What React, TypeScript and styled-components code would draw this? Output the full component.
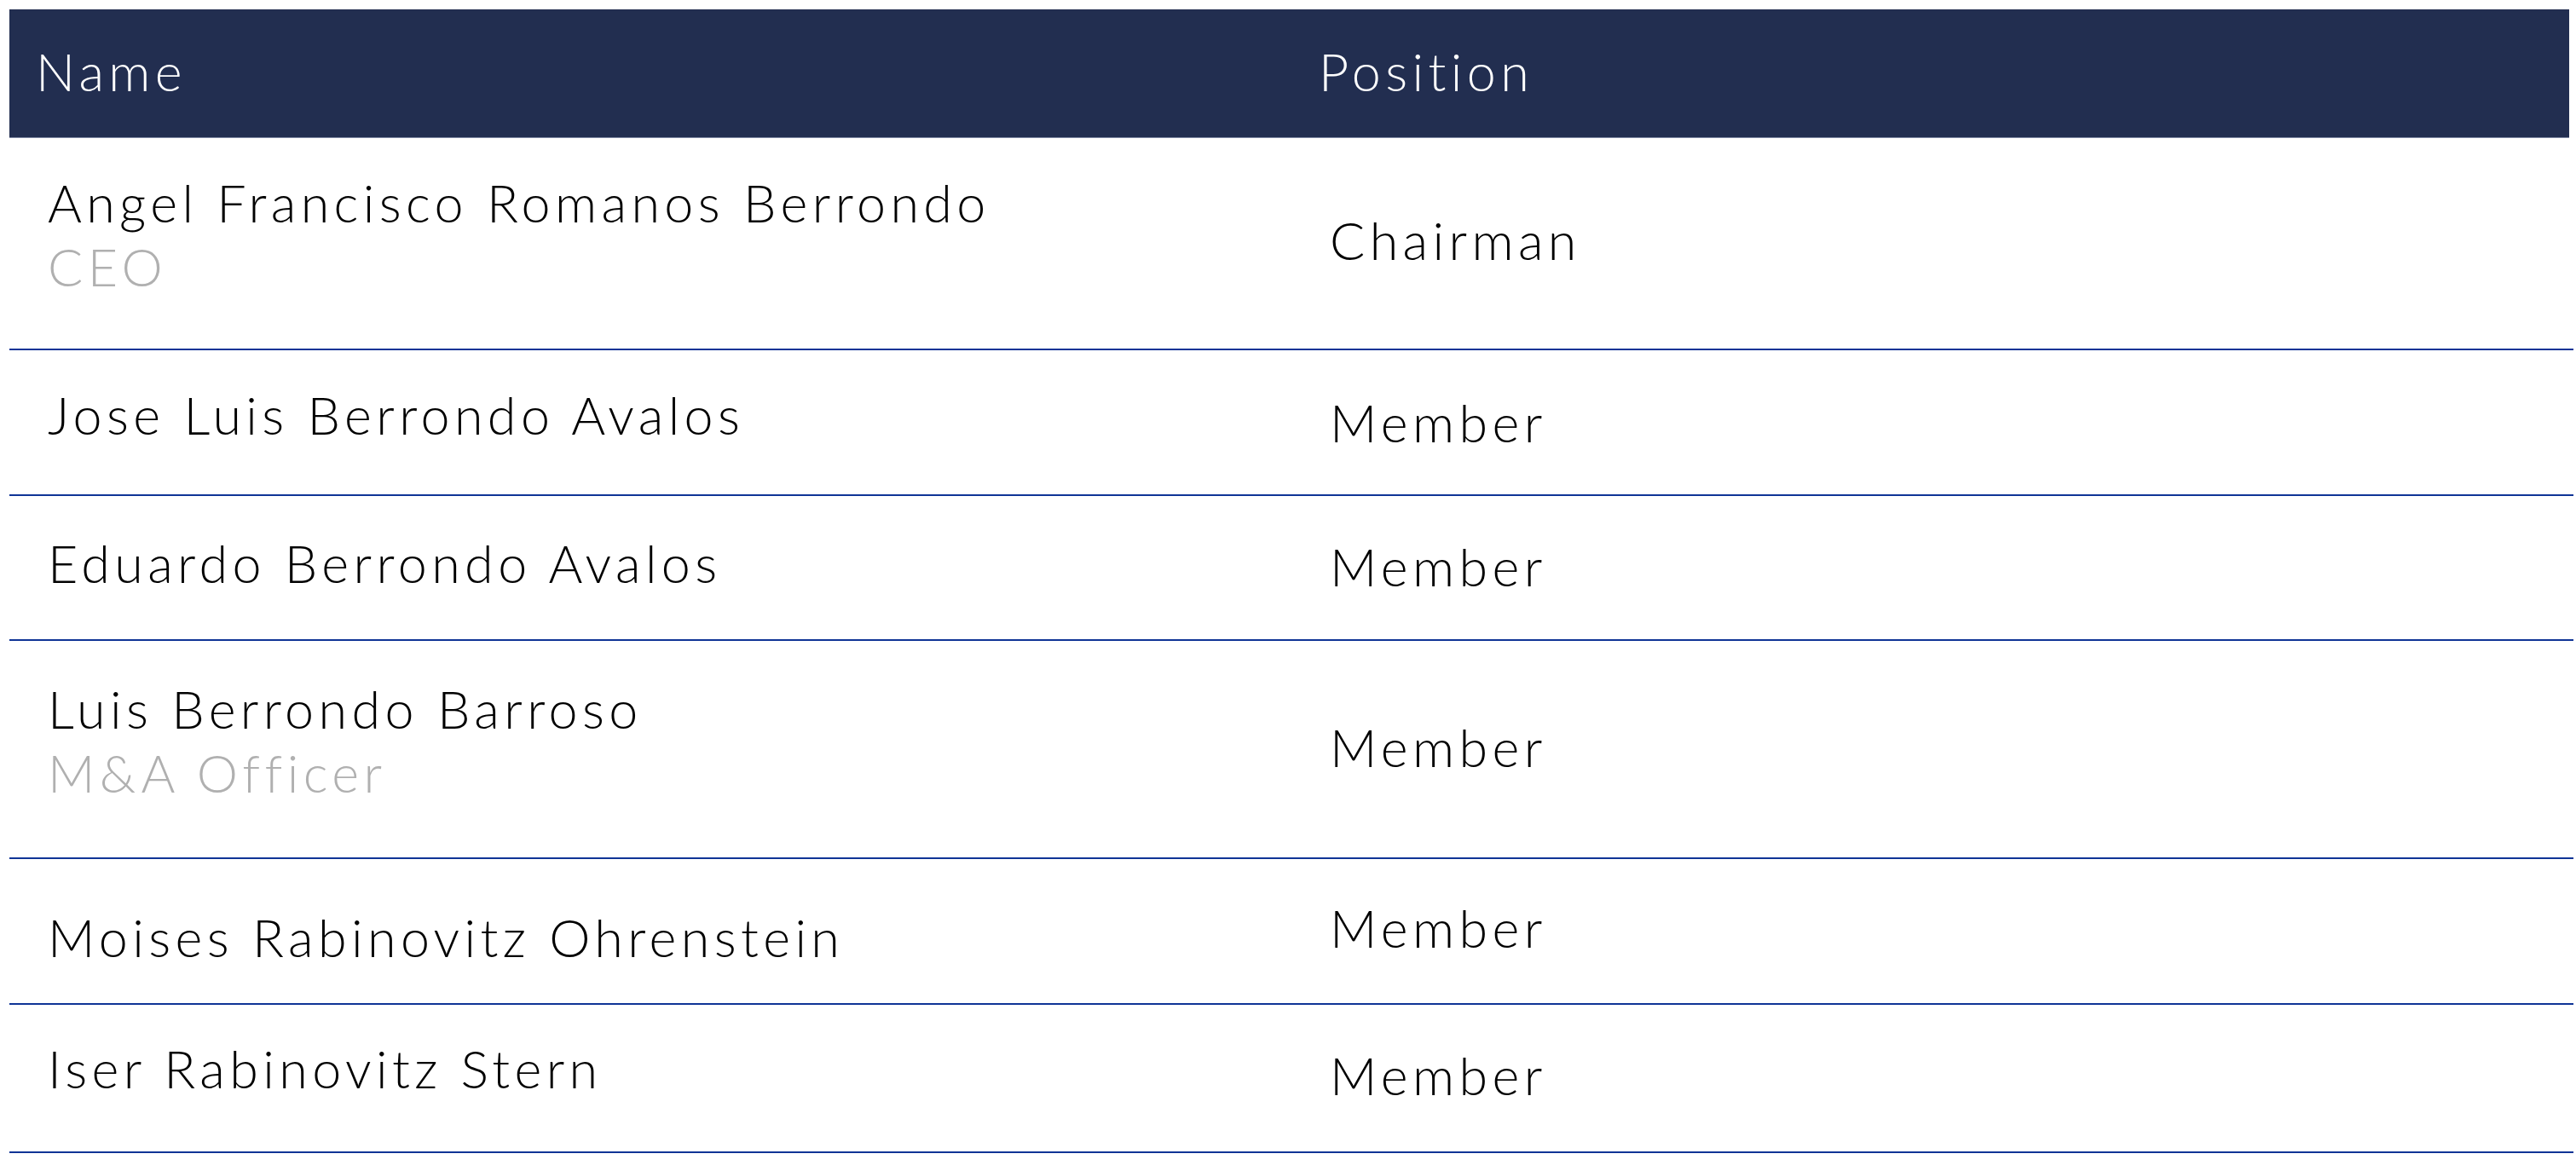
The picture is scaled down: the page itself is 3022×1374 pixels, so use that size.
import React from "react";
import styled, { createGlobalStyle } from "styled-components";

const Global = createGlobalStyle`
  html, body {
    margin: 0;
    padding: 0;
    background: #ffffff;
  }
  body {
    font-family: "Lato", "Liberation Sans", sans-serif;
  }
`;

const Page = styled.div`
  padding: 11px 0 0 11px;
`;

const Table = styled.div`
  width: 3008px;
  display: flex;
  flex-direction: column;
`;

const HeaderRow = styled.div`
  display: grid;
  grid-template-columns: 1505px 1fr;
  align-items: center;
  height: 150px;
  margin-right: 5px;
  background: #222e50;
  border-bottom: 1px solid #7e87a2;
`;

const HeaderCell = styled.div`
  padding: 0 0 6px 31px;
  color: #ffffff;
  font-family: "Lato", "Liberation Sans", sans-serif;
  font-weight: 300;
  font-size: 61px;
  line-height: 75px;
  letter-spacing: 5.4px;
`;

const Row = styled.div<{ $h: number }>`
  display: grid;
  grid-template-columns: 1505px 1fr;
  align-items: center;
  height: ${(p) => p.$h}px;
  box-sizing: border-box;
  border-bottom: 2px solid #0f3496;
`;

const NameCell = styled.div<{ $nudge: number }>`
  display: flex;
  flex-direction: column;
  padding-left: 45px;
  padding-top: ${(p) => Math.max(0, p.$nudge * 2)}px;
  padding-bottom: ${(p) => Math.max(0, -p.$nudge * 2)}px;
`;

const PositionCell = styled.div<{ $nudge: number }>`
  padding-left: 44px;
  padding-top: ${(p) => Math.max(0, p.$nudge * 2)}px;
  padding-bottom: ${(p) => Math.max(0, -p.$nudge * 2)}px;
`;

const Text = styled.span<{ $muted?: boolean }>`
  font-family: "Lato", "Liberation Sans", sans-serif;
  font-weight: 300;
  font-size: 61px;
  line-height: 75px;
  letter-spacing: 5.4px;
  color: ${(p) => (p.$muted ? "#b0b0b0" : "#000000")};
  white-space: nowrap;
`;

type Member = {
  name: string;
  role?: string;
  position: string;
  h: number;
  nameNudge: number;
  posNudge: number;
};

const members: Member[] = [
  { name: "Angel Francisco Romanos Berrondo", role: "CEO", position: "Chairman", h: 249, nameNudge: -11, posNudge: -4 },
  { name: "Jose Luis Berrondo Avalos", position: "Member", h: 171, nameNudge: -9, posNudge: 0 },
  { name: "Eduardo Berrondo Avalos", position: "Member", h: 170, nameNudge: -6, posNudge: -2 },
  { name: "Luis Berrondo Barroso", role: "M&A Officer", position: "Member", h: 256, nameNudge: -10, posNudge: -3 },
  { name: "Moises Rabinovitz Ohrenstein", position: "Member", h: 171, nameNudge: 7, posNudge: -4 },
  { name: "Iser Rabinovitz Stern", position: "Member", h: 174, nameNudge: -12, posNudge: -4 },
];

export default function App() {
  return (
    <Page>
      <Global />
      <Table>
        <HeaderRow>
          <HeaderCell>Name</HeaderCell>
          <HeaderCell>Position</HeaderCell>
        </HeaderRow>
        {members.map((m) => (
          <Row key={m.name} $h={m.h}>
            <NameCell $nudge={m.nameNudge}>
              <Text>{m.name}</Text>
              {m.role && <Text $muted>{m.role}</Text>}
            </NameCell>
            <PositionCell $nudge={m.posNudge}>
              <Text>{m.position}</Text>
            </PositionCell>
          </Row>
        ))}
      </Table>
    </Page>
  );
}
